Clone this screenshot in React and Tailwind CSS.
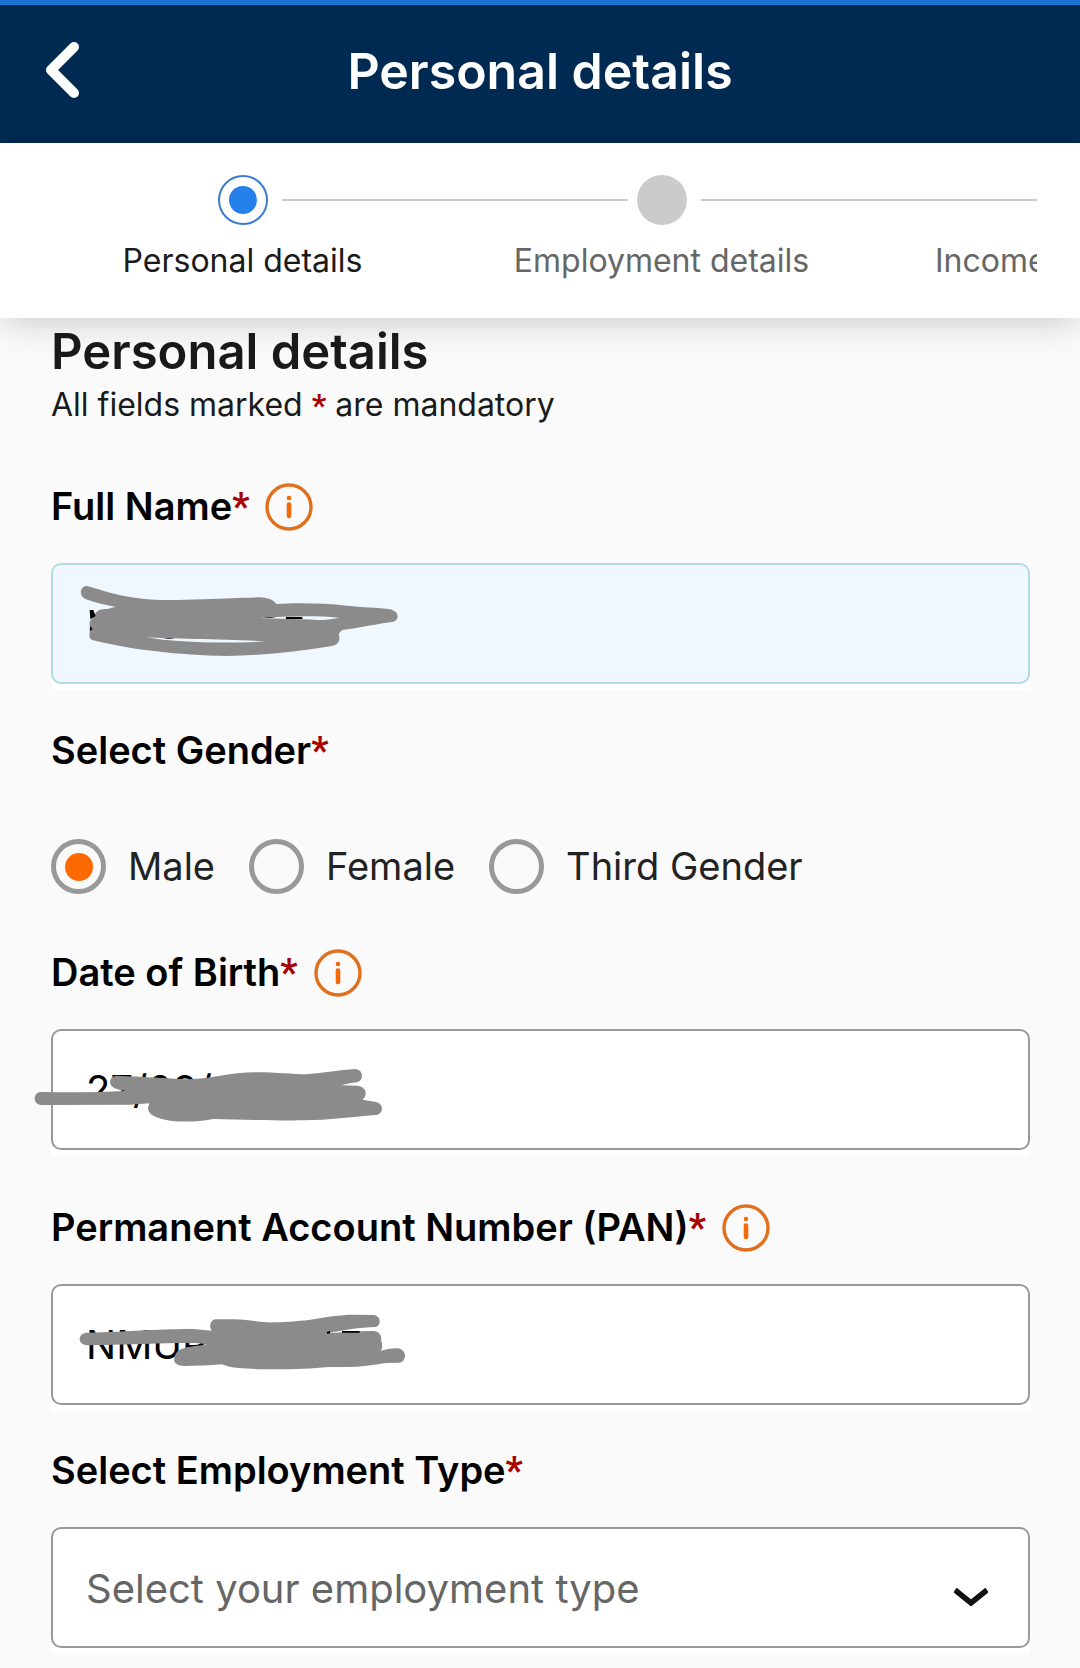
import { useState } from 'react'

const STEPS = [
  { label: 'Personal details', active: true },
  { label: 'Employment details' },
  { label: 'Income' },
]

const GENDERS = ['Male', 'Female', 'Third Gender']

// Header with the back button, shared by every step of the application form.
function Header({ title }) {
  return (
    <header className="grid h-[143px] grid-cols-[140px_1fr_140px] items-center border-t-[5px] border-[#1976d2] bg-[#002a52] pb-[6px]">
      <button type="button" aria-label="Back" className="ml-[44px] w-fit">
        <svg width="38" height="60" viewBox="0 0 38 60" fill="none" stroke="#fff" strokeWidth="10" strokeLinecap="round" strokeLinejoin="round">
          <path d="M30 6 L7 29 L30 52" />
        </svg>
      </button>
      <h1 className="text-center text-[50px] leading-[60px] font-semibold text-white">{title}</h1>
    </header>
  )
}

function StepDot({ active }) {
  if (active) {
    return (
      <span className="flex size-[50px] items-center justify-center rounded-full border-2 border-[#3a7bd0] bg-white">
        <span className="size-[28px] rounded-full bg-[#2680eb]" />
      </span>
    )
  }
  return <span className="size-[50px] rounded-full bg-[#cbcbcb]" />
}

function Stepper() {
  return (
    <nav aria-label="Progress" className="relative z-10 bg-white pt-8 pb-[37px] shadow-[0_6px_34px_-4px_rgba(0,0,0,0.22)]">
      <ol className="ml-[33px] mr-[43px] flex overflow-hidden">
        {STEPS.map((step, i) => (
          <li key={step.label} className="w-[419px] shrink-0" aria-current={step.active ? 'step' : undefined}>
            <div className="grid grid-cols-[1fr_50px_1fr] items-center">
              <div className="pr-[9px]">{i > 0 && <div className="h-[2px] bg-[#cbcbcb]" />}</div>
              <StepDot active={step.active} />
              <div className="pl-[14px]">
                <div className="h-[2px] bg-[#cbcbcb]" />
              </div>
            </div>
            <p
              className={
                'mt-4 text-[32px] leading-[40px] ' +
                (step.active ? 'text-center text-[#1a1a1a]' : i === 1 ? 'text-center text-[#666]' : 'pl-[64px] text-[#666]')
              }
            >
              {step.label}
            </p>
          </li>
        ))}
      </ol>
    </nav>
  )
}

function Required() {
  return <span className="font-['Roboto',sans-serif] font-bold text-[#a80000]">*</span>
}

function InfoButton({ label }) {
  return (
    <button type="button" aria-label={label} className="ml-4">
      <svg width="48" height="48" viewBox="0 0 48 48" fill="none">
        <circle cx="24" cy="24" r="22" stroke="#e0701e" strokeWidth="3.4" />
        <circle cx="24" cy="15" r="2.3" fill="#f26a0a" />
        <path d="M24 21.5 V33" stroke="#f26a0a" strokeWidth="4.6" strokeLinecap="round" />
      </svg>
    </button>
  )
}

function FieldLabel({ htmlFor, children, info }) {
  return (
    <div className="flex h-[48px] items-center">
      <label htmlFor={htmlFor} className="pb-[2px] text-[38px] leading-[44px] font-semibold text-black">
        {children}
        <Required />
      </label>
      {info && <InfoButton label={info} />}
    </div>
  )
}

function FieldBox({ children }) {
  return <div className="relative mt-8 bg-white pb-[6px]">{children}</div>
}

function TextField({ id, value, tone = 'border-[#999] bg-white', children }) {
  return (
    <FieldBox>
      <input
        id={id}
        type="text"
        defaultValue={value}
        className={'block h-[121px] w-full rounded-[10px] border-2 px-[33px] text-[40px] text-black outline-none ' + tone}
      />
      {children}
    </FieldBox>
  )
}

function NameScribble() {
  return (
    <svg className="pointer-events-none absolute left-[-21px] top-[-13px]" width="420" height="150" viewBox="0 0 1260 450" aria-hidden="true">
      <path
        fill="#8b8b8b"
        fillRule="evenodd"
        d="M170 108 C200 114 240 132 300 141 C370 153 430 151 520 148 C590 145 640 143 690 142 C715 144 731 150 739 162 C800 158 880 159 950 167 C1000 172 1040 173 1070 176 C1095 178 1103 190 1103 199 C1102 211 1094 216 1080 217 C1020 226 980 235 937 240 C931 244 928 249 926 253 C932 268 928 283 906 288 C800 305 700 316 590 318 C450 316 300 299 190 271 C177 268 178 259 179 245 L179 215 C186 207 193 198 197 189 C205 178 217 176 233 177 L257 170 C220 165 190 155 168 148 C155 142 151 133 153 121 C156 112 163 108 170 108 Z M690 204 C770 199 850 196 928 203 C900 208 880 211 862 210 C800 206 750 207 690 204 Z M350 262 C420 267 600 268 710 274 C600 281 440 279 350 262 Z"
      />
      <path fill="#000" d="M179 180 H190 L197 198 L181 208 Z M180 229 L188 237 L180 243 Z M768 201 H817 V207 H768 Z M700 204 Q720 199 738 204 Z M400 264 H434 Q417 269 400 264 Z" />
    </svg>
  )
}

function DobScribble() {
  return (
    <svg className="pointer-events-none absolute left-[-31px] top-[-9px]" width="420" height="150" viewBox="0 0 1260 450" aria-hidden="true">
      <path
        fill="#8b8b8b"
        d="M64 216 C150 218 240 217 318 213 C300 210 280 207 273 196 C266 184 273 168 290 167 C360 170 440 175 505 178 C580 176 630 157 710 157 C770 157 820 163 860 163 C910 158 960 150 1005 147 C1020 148 1026 158 1026 168 C1026 178 1020 184 1010 187 C994 189 978 192 965 196 L1010 197 C1028 198 1037 208 1037 220 C1037 228 1033 235 1027 239 L1065 245 C1080 248 1086 256 1086 266 C1085 278 1078 284 1065 285 C990 291 930 300 850 301 C750 302 660 298 580 297 C530 306 490 306 450 302 C410 296 384 284 384 264 L388 250 L330 254 L64 255 C50 254 44 246 44 235 C44 224 52 216 64 216 Z"
      />
    </svg>
  )
}

function PanScribble() {
  return (
    <svg className="pointer-events-none absolute left-[-21px] top-[-14px]" width="420" height="150" viewBox="0 0 1260 450" aria-hidden="true">
      <path
        fill="#8b8b8b"
        d="M172 188 C230 187 290 184 343 181 C400 178 450 177 492 177 L545 182 C537 170 540 152 555 148 L612 148 C650 149 680 155 709 157 C750 158 800 154 836 150 C890 141 930 134 970 134 L1030 135 C1043 137 1049 145 1049 153 C1049 163 1045 169 1037 171 C990 172 940 180 895 190 C940 187 990 182 1030 183 C1050 184 1056 200 1053 211 C1058 222 1058 234 1052 242 C1070 238 1086 234 1104 235 C1120 239 1125 249 1125 257 C1124 270 1117 277 1107 278 L1067 279 C1030 286 990 291 955 291 L895 291 C850 296 790 298 746 298 C700 298 660 297 627 294 C605 293 590 289 575 283 C540 287 500 288 463 288 C440 287 430 277 433 266 C435 252 440 245 452 238 C480 228 500 229 530 223 C510 218 480 219 448 219 C360 220 270 225 179 226 C160 226 149 219 149 207 C149 195 160 188 172 188 Z"
      />
      <path fill="#000" d="M890 186 L900 183 V190 L892 192 Z M936 183 H989 V188 H936 Z" />
    </svg>
  )
}

function GenderGroup() {
  const [gender, setGender] = useState('Male')
  return (
    <fieldset className="mt-9">
      <legend className="text-[38px] leading-[48px] font-semibold text-black">
        Select Gender
        <Required />
      </legend>
      <div className="mt-16 flex items-center gap-[34px]">
        {GENDERS.map((g) => (
          <label key={g} className="flex h-[55px] items-center gap-[22px] text-[38px] text-[#222]">
            <input
              type="radio"
              name="gender"
              value={g}
              checked={gender === g}
              onChange={() => setGender(g)}
              className="flex size-[55px] shrink-0 appearance-none items-center justify-center rounded-full border-[5px] border-[#999] before:size-[28px] before:rounded-full checked:before:bg-[#ff6a00]"
            />
            {g}
          </label>
        ))}
      </div>
    </fieldset>
  )
}

export default function App() {
  return (
    <div className="min-h-screen overflow-hidden bg-[#fafafa] font-['Inter',sans-serif]">
      <Header title="Personal details" />
      <Stepper />
      <main className="pl-[51px] pr-[50px]">
        <h2 className="pt-[4px] text-[49px] leading-[60px] font-semibold text-[#1a1a1a]">Personal details</h2>
        <p className="text-[32px] leading-[46px] text-[#1a1a1a]">
          All fields marked <Required /> are mandatory
        </p>

        <form className="mt-[55px] pb-3">
          <FieldLabel htmlFor="name" info="About full name">Full Name</FieldLabel>
          <TextField id="name" value="" tone="border-[#b4d8ea] bg-[#eff7ff]">
            <NameScribble />
          </TextField>

          <GenderGroup />

          <div className="mt-[55px]">
            <FieldLabel htmlFor="dob" info="About date of birth">Date of Birth</FieldLabel>
            <TextField id="dob" value="27/09/">
              <DobScribble />
            </TextField>
          </div>

          <div className="mt-12">
            <FieldLabel htmlFor="pan" info="About PAN">Permanent Account Number (PAN)</FieldLabel>
            <TextField id="pan" value="NMUP">
              <PanScribble />
            </TextField>
          </div>

          <div className="mt-9">
            <FieldLabel htmlFor="employment">Select Employment Type</FieldLabel>
            <FieldBox>
              <select
                id="employment"
                className="block h-[121px] w-full appearance-none rounded-[10px] border-2 border-[#999] bg-white px-[33px] pt-[2px] text-[40px] text-[#666] outline-none"
              >
                <option>Select your employment type</option>
              </select>
              <svg className="pointer-events-none absolute right-[42px] top-[60px]" width="34" height="22" viewBox="0 0 34 22" fill="none" stroke="#111" strokeWidth="5.5">
                <path d="M1 3 L17 16 L33 3" />
              </svg>
            </FieldBox>
          </div>
        </form>
      </main>
    </div>
  )
}
